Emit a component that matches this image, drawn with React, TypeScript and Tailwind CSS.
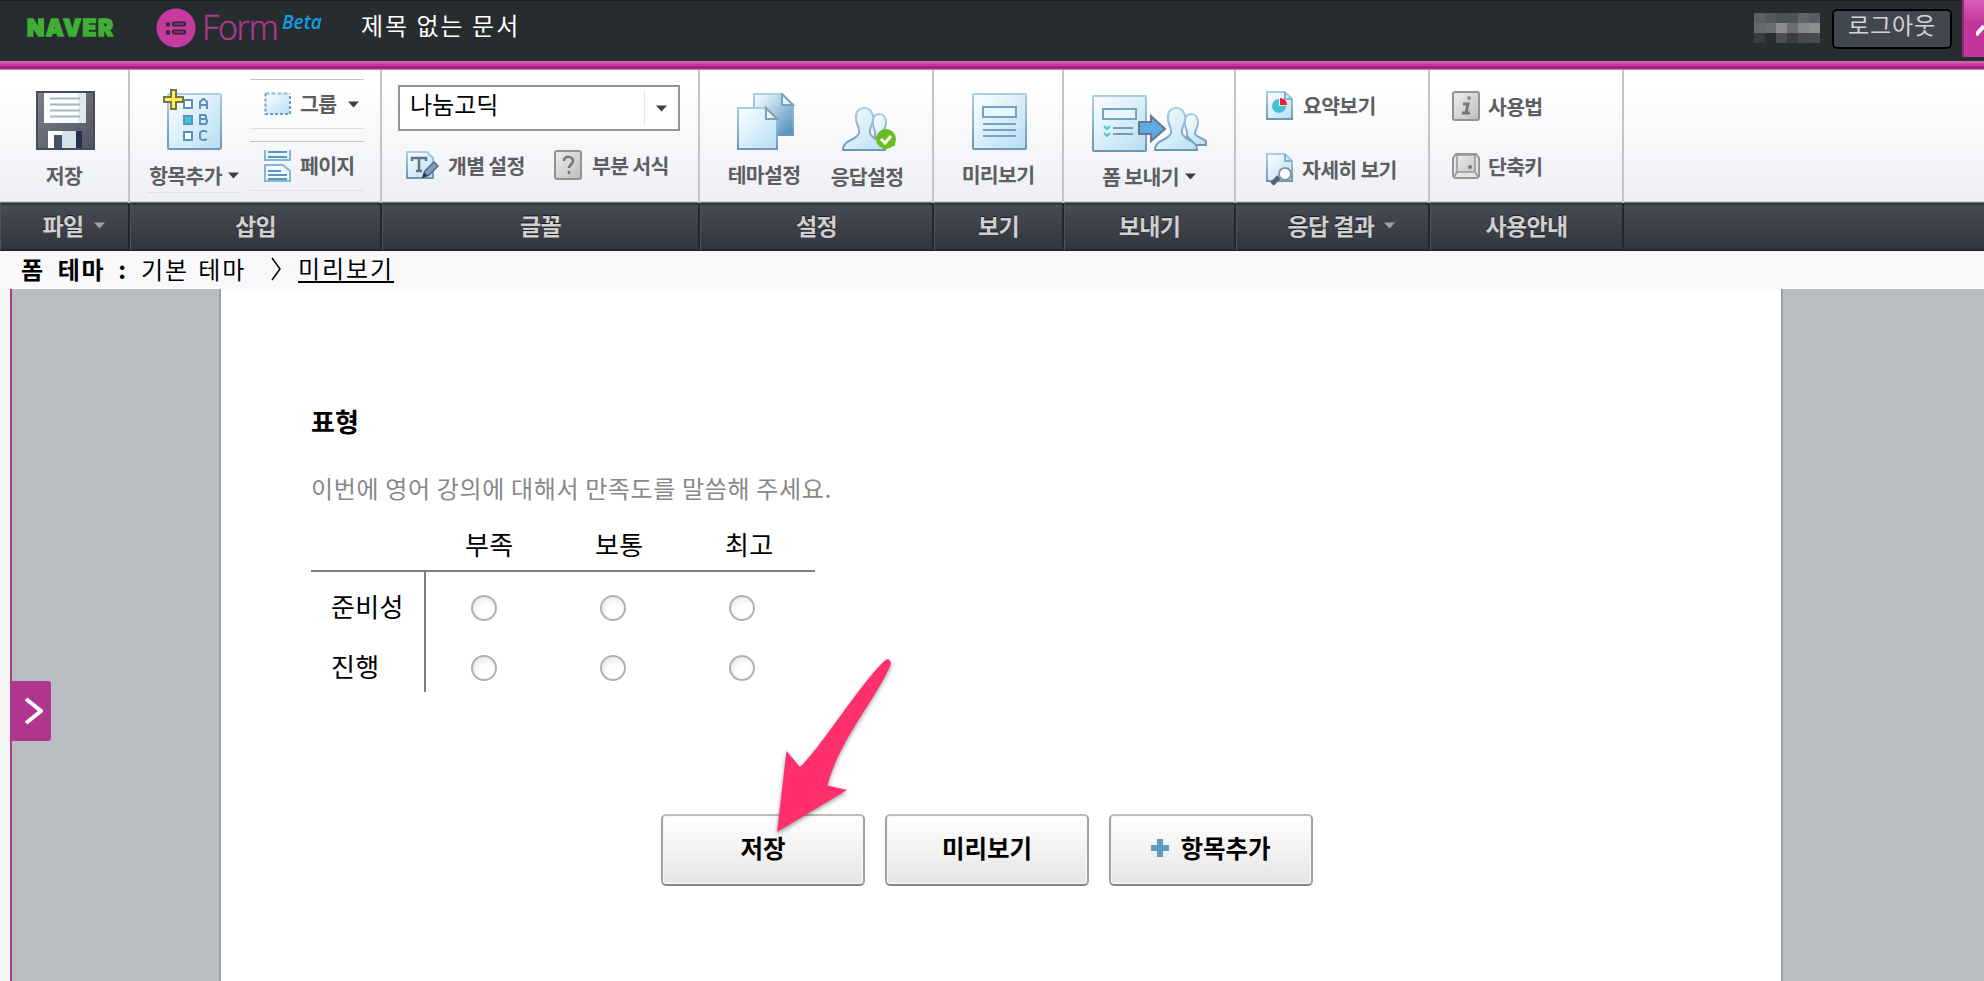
import type { ReactNode } from "react";

const answers = ["부족", "보통", "최고"];
const questions = ["준비성", "진행"];

function Caret({ className = "text-[#3d4043]" }: { className?: string }) {
  return (
    <svg width="11" height="7" viewBox="0 0 11 7" className={className}>
      <path d="M0 .5h11L5.5 6.5z" fill="currentColor" />
    </svg>
  );
}

// Shared gradients for the toolbar icons
function IconDefs() {
  return (
    <svg width="0" height="0" className="absolute">
      <defs>
        <linearGradient id="ice" x1="0" y1="0" x2="1" y2="1">
          <stop offset="0.1" stopColor="#f6fbff" />
          <stop offset="1" stopColor="#b5def3" />
        </linearGradient>
        <linearGradient id="deep" x1="0" y1="0" x2="1" y2="1">
          <stop offset="0.1" stopColor="#eef7fc" />
          <stop offset="0.9" stopColor="#5796c0" />
        </linearGradient>
        <linearGradient id="edge" x1="0" y1="0" x2="0" y2="1">
          <stop offset="0" stopColor="#a9cee8" />
          <stop offset="1" stopColor="#6f96b3" />
        </linearGradient>
        <linearGradient id="steel" x1="0" y1="0" x2="1" y2="1">
          <stop offset="0" stopColor="#7d7f8d" />
          <stop offset="1" stopColor="#535461" />
        </linearGradient>
        <linearGradient id="key" x1="0" y1="0" x2="1" y2="1">
          <stop offset="0" stopColor="#eeeeee" />
          <stop offset="1" stopColor="#bdbdbd" />
        </linearGradient>
      </defs>
    </svg>
  );
}

function FloppyIcon() {
  return (
    <svg width="59" height="60" viewBox="0 0 59 60" className="ml-[3px]">
      <path d="M1 1h57v57H1z" fill="url(#steel)" stroke="#4a4b58" strokeWidth="2" />
      <path d="M8 2h42v30H8z" fill="#fafdfd" />
      <path d="M42 2h8v30h-8z" fill="#dceaf0" />
      <path d="M14 7.500h30M14 13.500h30M14 19.500h30M14 25.500h30" stroke="#a7b8bd" strokeWidth="2" />
      <path d="M12 40h28v17H12z" fill="#fff" />
      <path d="M26 40h14v17H26z" fill="#d5e3e9" />
      <path d="M18 44h8v13h-8z" fill="#475069" />
      <path d="M40 40h6v17h-6z" fill="#26304c" />
    </svg>
  );
}

function AddItemIcon() {
  return (
    <svg width="60" height="62" viewBox="0 0 60 62" className="mr-[2px]">
      <rect x="5" y="5" width="53" height="55" rx="2" fill="url(#ice)" stroke="url(#edge)" strokeWidth="2" />
      <g fill="#fff" stroke="#5a93b5" strokeWidth="2">
        <path d="M21 11h8v8h-8zM21 43h8v8h-8z" />
        <path d="M21 27h8v8h-8z" fill="#3dc3dc" />
      </g>
      <g fill="none" stroke="#5a93b5" strokeWidth="2">
        <path d="M37 20v-7l3-3h1l3 3v7M37 16h7" />
        <path d="M37 26v9h6l1-2v-2l-2-1 1-1v-2l-1-1zM37 30h5" />
        <path d="M44 43l-2-1h-3l-2 2v5l2 2h3l2-1" />
      </g>
      <path d="M8 1h5v7h7v5h-7v7H8v-7H1V8h7z" fill="#fff34a" stroke="#777252" strokeWidth="2" />
    </svg>
  );
}

function GroupIcon() {
  return (
    <svg width="28" height="24" viewBox="0 0 28 24">
      <path d="M2 2h23v20H2z" fill="url(#ice)" />
      <path d="M1.500 1.500h24.500" fill="none" stroke="#8fb9d7" strokeWidth="2" strokeDasharray="4 2" />
      <path d="M1.500 1.500v20.500h24.500v-20.500" fill="none" stroke="#6c9ebf" strokeWidth="2" strokeDasharray="3 2" />
    </svg>
  );
}

function PageIcon() {
  return (
    <svg width="28" height="32" viewBox="0 0 28 32">
      <path d="M1 0v10h25V0" fill="#e6f4fb" stroke="#8ab5d1" strokeWidth="2" />
      <path d="M4 2h19M4 7h19" stroke="#5b96bc" strokeWidth="2" />
      <path d="M1 15h18l7 6v10H1z" fill="#f0f8fd" stroke="#8ab5d1" strokeWidth="2" />
      <path d="M4 21h13M4 25h19M4 29h19" stroke="#5b96bc" strokeWidth="2" />
    </svg>
  );
}

function FontIcon() {
  return (
    <svg width="33" height="30" viewBox="0 0 33 30">
      <path d="M1 1h20l6 6v20H1z" fill="url(#ice)" stroke="url(#edge)" strokeWidth="2" />
      <path d="M6 10V7h14v3M13 7v13M10 20h6" fill="none" stroke="#63747f" strokeWidth="2.500" />
      <path d="M17 26l2-6 9-9 4 4-9 9z" fill="#7d9ccb" stroke="#59677c" strokeWidth="1.500" />
      <path d="M16 27l2-6 4 4z" fill="#30373f" />
    </svg>
  );
}

function KeyIcon({ children }: { children: ReactNode }) {
  return (
    <svg width="29" height="31" viewBox="0 0 29 31">
      <rect x="1" y="1" width="26" height="28" rx="2" fill="url(#key)" stroke="#929292" strokeWidth="2" />
      {children}
    </svg>
  );
}

function KeycapIcon() {
  return (
    <svg width="29" height="27" viewBox="0 0 29 27">
      <path d="M4 1h20l3 4v18l-2 2H3l-2-2V5z" fill="#e4e4e4" stroke="#999" strokeWidth="2" />
      <path d="M5 2h18v17H5zM5 19l-3 5M23 19l3 5" fill="url(#key)" stroke="#969696" strokeWidth="1.500" />
      <circle cx="18" cy="14" r="2" fill="#777" />
    </svg>
  );
}

function ThemeIcon() {
  return (
    <svg width="58" height="58" viewBox="0 0 58 58" className="ml-[4px]">
      <path d="M17 1h28l11 11v30H17z" fill="url(#deep)" stroke="url(#edge)" strokeWidth="2" />
      <path d="M45 1v11h11z" fill="#e4f2fa" stroke="#7ba4c0" strokeWidth="2" />
      <path d="M1 15h28l11 11v30H1z" fill="url(#ice)" stroke="url(#edge)" strokeWidth="2" />
      <path d="M29 15v11h11z" fill="#f5fafd" stroke="#7f9fb4" strokeWidth="2" />
    </svg>
  );
}

function People() {
  return (
    <g fill="url(#ice)" stroke="url(#edge)" strokeWidth="2">
      <path d="M37 7c-5 0-7 5-6 11 1 4 3 7 2 11l8 9h11v-4c-5-4-11-4-11-8 0-3 3-5 3-10 0-6-3-9-7-9z" />
      <path d="M22 1c-6 0-9 5-8 12 1 6 4 8 3 13-2 8-16 6-16 17h42c0-11-13-9-15-17-1-5 2-7 3-13 1-7-3-12-9-12z" />
    </g>
  );
}

function ResponseIcon() {
  return (
    <svg width="56" height="46" viewBox="0 0 56 46" className="ml-[6px]">
      <People />
      <circle cx="44" cy="32" r="10" fill="#69bd20" />
      <path d="M39 32l4 4 6-7" fill="none" stroke="#fff" strokeWidth="3" />
    </svg>
  );
}

function PreviewIcon() {
  return (
    <svg width="55" height="58" viewBox="0 0 55 58" className="ml-[2px]">
      <rect x="1" y="1" width="53" height="55" rx="1" fill="url(#ice)" stroke="url(#edge)" strokeWidth="2" />
      <path d="M11 14h33v10H11z" fill="#e9f6fc" stroke="#76a3c0" strokeWidth="2" />
      <path d="M11 31h33M11 37h33M11 43h33" stroke="#7ba3bf" strokeWidth="2" />
    </svg>
  );
}

function SendIcon() {
  return (
    <svg width="116" height="58" viewBox="0 0 116 58" className="ml-[2px]">
      <rect x="1" y="1" width="53" height="55" rx="1" fill="url(#ice)" stroke="url(#edge)" strokeWidth="2" />
      <path d="M11 14h33v10H11z" fill="#e9f6fc" stroke="#76a3c0" strokeWidth="2" />
      <path d="M21 33h20M21 39h20" stroke="#7c9aae" strokeWidth="2" />
      <path d="M12 31l3 3 3-3M12 38l3 3 3-3" fill="none" stroke="#43c5dc" strokeWidth="2" />
      <g transform="translate(62 12)">
        <People />
      </g>
      <path d="M47 27h12v-6l14 13-14 12v-7H47z" fill="#5caae0" stroke="#68758d" strokeWidth="2" />
    </svg>
  );
}

function SummaryIcon() {
  return (
    <svg width="28" height="30" viewBox="0 0 28 30">
      <path d="M1 1h18l7 7v20H1z" fill="url(#ice)" stroke="url(#edge)" strokeWidth="2" />
      <path d="M19 1v7h7" fill="none" stroke="#88aecb" strokeWidth="2" />
      <path d="M13 8a7 7 0 1 0 7 7h-7z" fill="#41c1da" />
      <path d="M14 7v7h7a7 7 0 0 0-7-7z" fill="#ee1c2c" />
    </svg>
  );
}

function DetailIcon() {
  return (
    <svg width="28" height="33" viewBox="0 0 28 33">
      <path d="M1 1h18l7 7v20H1z" fill="url(#ice)" stroke="url(#edge)" strokeWidth="2" />
      <path d="M19 1v7h7" fill="none" stroke="#88aecb" strokeWidth="2" />
      <path d="M13 24l-7 7" stroke="#566270" strokeWidth="5" />
      <circle cx="19" cy="21" r="6" fill="#fff" stroke="#8195a3" strokeWidth="2" />
    </svg>
  );
}

function ToolText({ children }: { children: ReactNode }) {
  return (
    <span className="flex h-6 items-center pb-0.5 whitespace-nowrap text-[20.500px] leading-6 font-bold tracking-[-0.700px] text-[#5c5e61]">
      {children}
    </span>
  );
}

function Group({ label, width, caret, children }: { label: string; width: string; caret?: boolean; children: ReactNode }) {
  return (
    <section className={`flex shrink-0 flex-col ${width}`}>
      <div className="flex h-[133px] border-r-2 border-[#c3c6c8]">{children}</div>
      <div
        className={`flex h-[48px] items-center justify-center gap-2.5 border-r-2 border-b border-l border-[#24262d] border-l-[#50525b] pb-0.5 text-[23px] font-bold tracking-[-0.600px] text-[#d0d0d0] [text-shadow:0_-1px_1px_#17181d] ${caret ? "pl-[18px]" : ""}`}
      >
        {label}
        {caret && <Caret className="text-[#a2a2a4]" />}
      </div>
    </section>
  );
}

function Header() {
  return (
    <header className="flex h-[60px] items-start bg-[#272c2f] shadow-[inset_0_1px_0_#1b1f22]">
      <div className="ml-[27px] mt-[15px] w-[91px] font-['Inter'] text-[22.500px] leading-[26px] font-black tracking-[1.500px] text-[#3fae35] [-webkit-text-stroke:1.500px_#3fae35]">
        NAVER
      </div>
      <svg width="40" height="40" viewBox="0 0 40 40" className="ml-[38px] mt-2">
        <circle cx="20" cy="20" r="19.500" fill="#c43a9f" />
        <path d="M10 16.500h4M10 24.500h4" stroke="#30283a" strokeWidth="4" />
        <rect x="17" y="14.500" width="12" height="3" rx="1" fill="none" stroke="#30283a" strokeWidth="2" />
        <rect x="17" y="22.500" width="12" height="3" rx="1" fill="none" stroke="#30283a" strokeWidth="2" />
      </svg>
      <div className="ml-[6px] mt-[7px] w-[80px] font-['Open_Sans'] text-[34px] leading-[40px] font-light tracking-[-1.200px] text-[#a83a91] [-webkit-text-stroke:0.500px_#a83a91]">
        Form
      </div>
      <div className="mt-[10px] w-[79px] font-['Open_Sans'] text-[19px] leading-6 font-semibold italic text-[#0c9fe4]">
        Beta
      </div>
      <h1 className="mt-[7px] flex-1 text-[24px] leading-9 tracking-[2px] text-white">제목 없는 문서</h1>
      {/* Masked user name */}
      <div className="mt-[13px] mr-[12px] grid h-[30px] w-[66px] grid-cols-6 grid-rows-3">
        {["#5c6062", "#54585a", "#4d5153", "#4f5355", "#606466", "#585c5e", "#66696b", "#6b6e70", "#8b8d8f", "#6c6f71", "#858789", "#8c8e90", "#393c3f", "#2a2c2f", "#4d4d50", "#3b3d40", "#484a4d", "#4a4d50"].map((c, i) => (
          <div key={i} style={{ backgroundColor: c }} />
        ))}
      </div>
      <button className="mt-[9px] mr-[10px] flex h-[40px] w-[120px] items-center justify-center rounded-[5px] border-2 border-black bg-[#414751] pb-2.5 text-[23px] tracking-[0.900px] text-[#d4d4d4]">
        로그아웃
      </button>
      <div className="flex h-[57px] w-[22px] items-center justify-end overflow-hidden border-l-2 border-[#8a2c73] bg-linear-to-b from-[#d75db9] to-[#c3359a] to-40%">
        <svg width="8" height="14" viewBox="0 0 8 14">
          <path d="M0 13l8-9" stroke="#fff" strokeWidth="4" />
        </svg>
      </div>
    </header>
  );
}

function Toolbar() {
  return (
    <nav className="flex h-[181px] shrink-0 bg-[linear-gradient(#fff_0,#fff_20px,#eeeff4_131px,#b9bbbe_132px,#2a2b32_133px,#484a53_136px,#34363f_178px,#191a20_181px)]">
      <Group label="파일" width="w-[130px]" caret>
        <div className="flex w-full flex-col items-center gap-[13px] pt-[21px]">
          <FloppyIcon />
          <ToolText>저장</ToolText>
        </div>
      </Group>
      <Group label="삽입" width="w-[252px]">
        <div className="mb-[10px] ml-[17px] flex w-[94px] flex-col items-center gap-[13px] border-b border-[#dce3e6] pt-[19px]">
          <AddItemIcon />
          <ToolText>
            항목추가
            <span className="ml-1.5">
              <Caret />
            </span>
          </ToolText>
        </div>
        <div className="mt-[9px] ml-[9px] flex w-[114px] flex-col gap-3">
          <div className="flex h-[50px] items-center border-t border-b border-t-[#c2c4c6] border-b-[#dfe2e5] pl-[14px]">
            <GroupIcon />
            <span className="ml-2">
              <ToolText>그룹</ToolText>
            </span>
            <span className="ml-3">
              <Caret />
            </span>
          </div>
          <div className="flex h-[50px] items-center gap-2 border-t border-b border-t-[#c2c4c6] border-b-[#dfe2e5] pl-[14px]">
            <PageIcon />
            <ToolText>페이지</ToolText>
          </div>
        </div>
      </Group>
      <Group label="글꼴" width="w-[318px]">
        <div className="flex flex-col pl-4 pt-[15px]">
          <div className="flex h-[46px] w-[282px] items-center border-2 border-[#949494] bg-white pl-2.5 text-black">
            <span className="flex-1 pb-2 text-[24px] leading-8">나눔고딕</span>
            <span className="flex h-9 w-[34px] items-center justify-center border-l border-[#e5e5e5]">
              <Caret />
            </span>
          </div>
          <div className="mt-[19px] flex items-center pl-2">
            <FontIcon />
            <span className="ml-[9px] w-[106px]">
              <ToolText>개별 설정</ToolText>
            </span>
            <KeyIcon>
              <path d="M10 11c0-6 9-5 9 0 0 3-4 4-4 7M15 21v3" fill="none" stroke="#757575" strokeWidth="2.500" />
            </KeyIcon>
            <span className="ml-[9px]">
              <ToolText>부분 서식</ToolText>
            </span>
          </div>
        </div>
      </Group>
      <Group label="설정" width="w-[234px]">
        <div className="flex pl-[27px]">
          <div className="flex w-[74px] flex-col items-center gap-[12px] pt-[23px]">
            <ThemeIcon />
            <ToolText>테마설정</ToolText>
          </div>
          <div className="ml-[29px] flex w-[74px] flex-col items-center gap-[12px] pt-[37px]">
            <ResponseIcon />
            <ToolText>응답설정</ToolText>
          </div>
        </div>
      </Group>
      <Group label="보기" width="w-[130px]">
        <div className="flex w-full flex-col items-center gap-[12px] pt-[23px]">
          <PreviewIcon />
          <ToolText>미리보기</ToolText>
        </div>
      </Group>
      <Group label="보내기" width="w-[172px]">
        <div className="flex w-full flex-col items-center gap-[12px] pt-[25px]">
          <SendIcon />
          <ToolText>
            폼 보내기
            <span className="ml-1.5">
              <Caret />
            </span>
          </ToolText>
        </div>
      </Group>
      <Group label="응답 결과" width="w-[194px]" caret>
        <div className="flex flex-col gap-8 pl-[30px] pt-[21px]">
          <div className="flex h-[30px] items-center gap-[9px]">
            <SummaryIcon />
            <ToolText>요약보기</ToolText>
          </div>
          <div className="flex h-[33px] items-center gap-[8px]">
            <DetailIcon />
            <ToolText>자세히 보기</ToolText>
          </div>
        </div>
      </Group>
      <Group label="사용안내" width="w-[194px]">
        <div className="flex flex-col gap-[31px] pl-[22px] pt-[21px]">
          <div className="flex h-[31px] items-center gap-[7px]">
            <KeyIcon>
              <path d="M15.500 7h3M11 13h5l-2 9h4M10 22h4" fill="none" stroke="#777" strokeWidth="3" />
            </KeyIcon>
            <ToolText>사용법</ToolText>
          </div>
          <div className="flex h-[27px] items-center gap-[7px]">
            <KeycapIcon />
            <ToolText>단축키</ToolText>
          </div>
        </div>
      </Group>
    </nav>
  );
}

function Radio() {
  return (
    <span className="block size-[26px] rounded-full border-2 border-[#b2b2b2] bg-[radial-gradient(circle_at_60%_65%,#fff_35%,#dedede_100%)]" />
  );
}

function SatisfactionTable() {
  return (
    <div className="w-[504px] text-[26px] leading-9 text-black">
      <div className="flex h-[54px] border-b-2 border-[#808080] pt-[8px]">
        <div className="w-[154px] shrink-0" />
        {answers.map((answer) => (
          <div key={answer} className="w-[130px] shrink-0 tracking-[0.400px] whitespace-nowrap">
            {answer}
          </div>
        ))}
      </div>
      <div className="flex h-[120px]">
        <div className="w-[115px] border-r-2 border-[#808080] pl-5">
          {questions.map((question) => (
            <div key={question} className="flex h-[60px] items-center pt-2 tracking-[0.300px]">
              {question}
            </div>
          ))}
        </div>
        <div className="pl-[45px]">
          {questions.map((question) => (
            <div key={question} className="flex h-[60px] items-center gap-[103px] pt-3">
              {answers.map((answer) => (
                <Radio key={answer} />
              ))}
            </div>
          ))}
        </div>
      </div>
    </div>
  );
}

function FormButton({ children }: { children: ReactNode }) {
  return (
    <button className="flex h-[72px] w-[204px] items-center justify-center rounded-[5px] border-2 border-[#a2a2a2] border-t-[#bcbcbc] border-b-[#858585] bg-linear-to-b from-white to-[#e6e6e6] pb-1 text-[24.500px] font-bold text-black shadow-[inset_0_0_0_1px_#f8f8f8]">
      {children}
    </button>
  );
}

export default function App() {
  return (
    <div className="flex h-[981px] w-[1984px] flex-col overflow-hidden bg-white font-['Noto_Sans_CJK_KR',sans-serif]">
      <IconDefs />
      <Header />
      <div className="h-[10px] shrink-0 bg-[linear-gradient(#3a2d38_0,#3a2d38_1px,#bd6ea9_1px,#cd62b1_3px,#c3359a_4px,#c3359a_6px,#a10b72_7px,#b43a8d_9px,#d9a9cb_10px)]" />
      <Toolbar />
      <div className="flex h-[38px] shrink-0 items-center bg-[#f9f9fb] pb-[3px] pl-[21px] text-[24px] leading-8 text-black">
        <span className="w-[120px] font-bold tracking-[1.600px] [word-spacing:6px] whitespace-pre">폼 테마 :</span>
        <span className="w-[116px] tracking-[1.900px] [word-spacing:2px]">기본 테마</span>
        <span className="w-[41px] overflow-hidden pl-[14px]">
          <svg width="11" height="24" viewBox="0 0 11 24">
            <path d="M1 1l8 11-8 11" fill="none" stroke="#000" strokeWidth="1.500" />
          </svg>
        </span>
        <a className="border-b-2 border-black leading-[26px] tracking-[1.900px]">미리보기</a>
      </div>
      <main className="flex flex-1 bg-[#b8bec2]">
        <div className="w-3 border-r-2 border-[#b0358f] bg-[#f6f6f6]" />
        <aside className="w-[207px] pt-[392px]">
          <button className="flex h-[60px] w-[39px] items-center justify-center rounded-r-[3px] bg-[#b0358f] pl-1">
            <svg width="19" height="28" viewBox="0 0 19 28">
              <path d="M2 2l15 12L2 26" fill="none" stroke="#fff" strokeWidth="4" />
            </svg>
          </button>
        </aside>
        <div className="relative w-[1564px] border-x-2 border-[#979fa3] bg-white pl-[90px]">
          <h2 className="mt-[114px] text-[26px] leading-9 font-bold text-black">표형</h2>
          <p className="mt-[31px] text-[24px] leading-9 tracking-[0.650px] text-[#888]">
            이번에 영어 강의에 대해서 만족도를 말씀해 주세요.
          </p>
          <div className="mt-[12px]">
            <SatisfactionTable />
          </div>
          <div className="mt-[122px] flex gap-5 pl-[350px]">
            <FormButton>저장</FormButton>
            <FormButton>미리보기</FormButton>
            <FormButton>
              <svg width="18" height="18" viewBox="0 0 18 18" className="mr-[11px]">
                <path d="M6 0h6v6h6v6h-6v6H6v-6H0V6h6z" fill="#5f9bbd" />
              </svg>
              항목추가
            </FormButton>
          </div>
          {/* Pointer to the save button */}
          <svg width="124" height="184" viewBox="0 0 124 184" className="absolute left-[549px] top-[365px] drop-shadow-[0_2px_2px_#00000066]">
            <path
              d="M7 178L16.500 97 30 113C50 95 92 27 115 6.500Q120 3 121 10C108 42 68 88 57.500 131.500L77 136z"
              fill="#ff2f6e"
            />
          </svg>
        </div>
      </main>
    </div>
  );
}
